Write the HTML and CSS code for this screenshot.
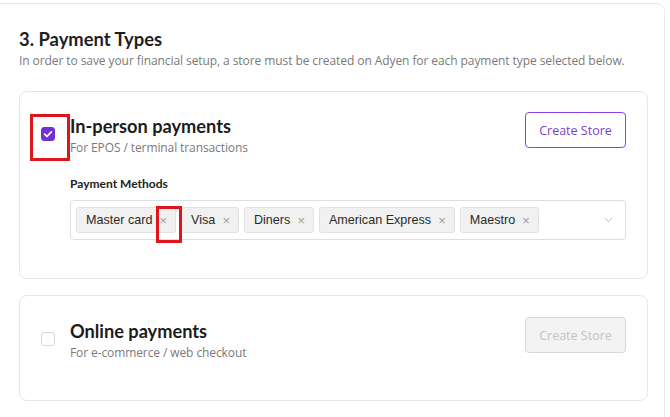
FILE: index.html
```html
<!DOCTYPE html>
<html lang="en">
<head>
<meta charset="utf-8">
<title>Payment Types</title>
<link rel="stylesheet" href="styles.css">
</head>
<body>
<section class="panel">
  <h2 class="panel-title">3. Payment Types</h2>
  <p class="panel-desc">In order to save your financial setup, a store must be created on Adyen for each payment type selected below.</p>

  <div class="card">
    <div class="card-head">
      <span class="check check-on highlight">
        <svg viewBox="0 0 14 14" width="14" height="14"><path d="M3.6 7.2 L6 9.4 L10.4 4.9" fill="none" stroke="#fff" stroke-width="1.8" stroke-linecap="round" stroke-linejoin="round"/></svg>
      </span>
      <div class="card-text">
        <h3 class="card-title">In-person payments</h3>
        <p class="card-sub">For EPOS / terminal transactions</p>
      </div>
      <button class="btn">Create Store</button>
    </div>
    <div class="methods">
      <div class="methods-label">Payment Methods</div>
      <div class="select">
        <div class="tags">
          <span class="tag">Master card<span class="tag-x highlight-x">×</span></span>
          <span class="tag">Visa<span class="tag-x">×</span></span>
          <span class="tag">Diners<span class="tag-x">×</span></span>
          <span class="tag">American Express<span class="tag-x">×</span></span>
          <span class="tag">Maestro<span class="tag-x">×</span></span>
        </div>
        <svg class="chevron" viewBox="0 0 10 6" width="9" height="6"><path d="M1 1 L5 4.6 L9 1" fill="none" stroke="#b8b8b8" stroke-width="1.1"/></svg>
      </div>
    </div>
  </div>

  <div class="card card-second">
    <div class="card-head">
      <span class="check"></span>
      <div class="card-text">
        <h3 class="card-title">Online payments</h3>
        <p class="card-sub">For e-commerce / web checkout</p>
      </div>
      <button class="btn btn-disabled" disabled>Create Store</button>
    </div>
  </div>
</section>
</body>
</html>
```
FILE: styles.css
```css
* { box-sizing: border-box; }
html, body { margin: 0; padding: 0; background: #fff; }
body {
  font-family: "Lato", "Open Sans", sans-serif;
  color: #222;
  overflow: hidden;
}
.panel {
  margin: 3px 5px 0 -10px;
  border: 1px solid #e9e9e9;
  border-radius: 8px;
  padding: 24px 16px 0 28px;
  min-height: 430px;
}
.panel-title {
  margin: 0;
  font-size: 18.4px;
  line-height: 22px;
  font-weight: 700;
  color: #1f1f1f;
}
.panel-desc {
  margin: 3px 0 0;
  font-family: "Open Sans", sans-serif;
  font-size: 12px;
  line-height: 16px;
  color: #7a7a7a;
  letter-spacing: -0.08px;
  white-space: nowrap;
}
.card {
  margin-top: 22px;
  border: 1px solid #e6e6e6;
  border-radius: 8px;
  padding: 20px 21px 38px 21px;
}
.card-second {
  margin-top: 16px;
  padding-top: 21px;
  padding-bottom: 39px;
}
.card-head {
  display: flex;
  align-items: flex-start;
}
.check {
  position: relative;
  flex: none;
  width: 14px;
  height: 14px;
  margin-top: 15px;
  margin-right: 15px;
  border: 1px solid #d6d6d6;
  border-radius: 3px;
  background: #fff;
  display: flex;
}
.check-on {
  background: #7331d3;
  border-color: #7331d3;
}
.check-on svg { margin: -1px; }
.highlight::after {
  content: "";
  position: absolute;
  left: -12px;
  top: -14px;
  width: 34px;
  height: 41px;
  border: 3px solid #e0141b;
}
.card-text { flex: 1; margin-top: 3px; }
.card-title {
  margin: 0;
  font-size: 18.2px;
  line-height: 22px;
  font-weight: 700;
  color: #1c1c1c;
}
.card-sub {
  margin: 3px 0 0;
  font-family: "Open Sans", sans-serif;
  font-size: 12px;
  line-height: 16px;
  color: #7a7a7a;
  letter-spacing: -0.1px;
}
.btn {
  flex: none;
  width: 101px;
  height: 36px;
  border: 1px solid #8a43e0;
  border-radius: 4px;
  background: #fff;
  color: #7a3fcc;
  font-family: "Open Sans", sans-serif;
  font-size: 12.5px;
  padding: 0;
}
.btn-disabled {
  border-color: #d9d9d9;
  background: #f3f3f3;
  color: #c4c4c4;
}
.methods { margin: 20px 0 0 29px; }
.methods-label {
  font-size: 12px;
  line-height: 16px;
  font-weight: 700;
  color: #222;
}
.select {
  margin-top: 8px;
  height: 40px;
  border: 1px solid #dedede;
  border-radius: 4px;
  display: flex;
  align-items: center;
  padding: 0 12px 0 5px;
}
.tags { flex: 1; display: flex; gap: 5px; }
.tag {
  display: inline-flex;
  align-items: center;
  height: 26px;
  padding: 0 8px 0 9px;
  background: #f1f1f1;
  border: 1px solid #e2e2e2;
  border-radius: 3px;
  font-family: "Liberation Sans", Arial, sans-serif;
  font-size: 12.6px;
  color: #2b2b2b;
}
.tag-x {
  position: relative;
  margin-left: 7px;
  font-size: 13px;
  color: #a0a0a0;
}
.highlight-x::after {
  content: "";
  position: absolute;
  left: -4px;
  top: -7px;
  width: 20px;
  height: 31px;
  border: 3px solid #e0141b;
}
.chevron { flex: none; }
```
